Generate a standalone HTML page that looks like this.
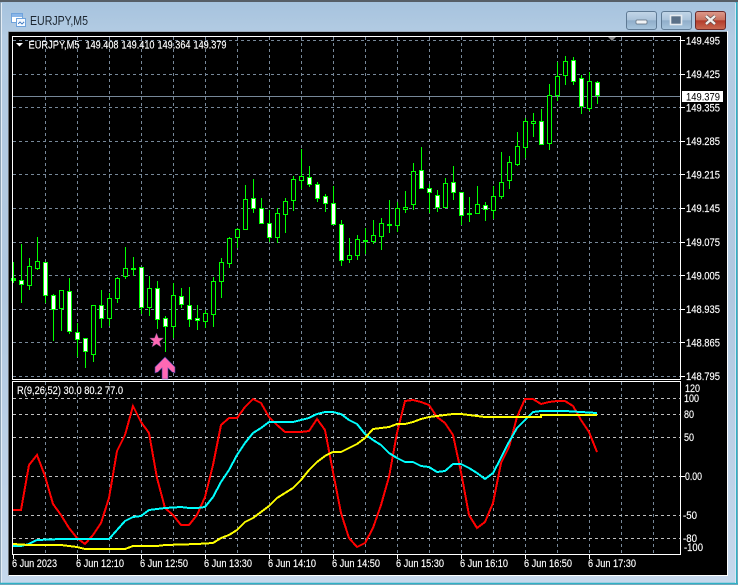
<!DOCTYPE html>
<html><head><meta charset="utf-8"><title>EURJPY,M5</title>
<style>
html,body{margin:0;padding:0;background:#fff;width:738px;height:585px;overflow:hidden}
svg{display:block}
text{font-family:"Liberation Sans",sans-serif;font-size:11px;fill:#fff;stroke:#fff;stroke-width:.15}
.w path{stroke:#0f0;stroke-width:1;fill:none}
.w rect{stroke:#0f0;stroke-width:1;fill:#000}
.w rect.f{fill:#fff}
.w rect.g{fill:#0f0}
</style></head><body>
<svg width="738" height="585" viewBox="0 0 738 585" xmlns="http://www.w3.org/2000/svg">
<defs>
<linearGradient id="glass" x1="0" y1="0" x2="0" y2="1"><stop offset="0" stop-color="#a6c3de"/><stop offset=".06" stop-color="#b4cce3"/><stop offset=".5" stop-color="#b0c8e0"/><stop offset="1" stop-color="#c6d8ec"/></linearGradient>
<linearGradient id="btn" x1="0" y1="0" x2="0" y2="1"><stop offset="0" stop-color="#c3d6e8"/><stop offset=".48" stop-color="#aac3da"/><stop offset=".5" stop-color="#8fadc9"/><stop offset="1" stop-color="#a9c6de"/></linearGradient>
<linearGradient id="cls" x1="0" y1="0" x2="0" y2="1"><stop offset="0" stop-color="#dd9a8c"/><stop offset=".48" stop-color="#c8725f"/><stop offset=".5" stop-color="#b23a2a"/><stop offset="1" stop-color="#c96a52"/></linearGradient>
</defs>
<rect width="738" height="585" fill="#fff"/>
<rect x="0" y="0" width="738" height="585" fill="#8ea3b5"/>
<rect x="1" y="2" width="735" height="582" fill="url(#glass)"/>
<path d="M0 1H738" stroke="#44484c" stroke-width="1.5"/>
<path d="M1.5 3V583" stroke="#e4edf5" stroke-width="1"/>
<path d="M0 583.5H738M736.5 2V584" stroke="#2fb2c6" stroke-width="1.5"/>
<path d="M735.5 3V583" stroke="#d8e6f2" stroke-width="1"/>

<!-- title icon -->
<g shape-rendering="crispEdges">
<rect x="11.5" y="13.5" width="11" height="9" fill="#fff" stroke="#6fa3dc"/>
<rect x="12" y="14" width="10" height="3" fill="#8ab6e8"/>
<rect x="16.500" y="18.500" width="9" height="8" fill="#f4f9ff" stroke="#6fa3dc"/>
<path d="M18 24l2-2 2 2 2-2" stroke="#4f86c6" fill="none"/>
</g>
<text x="30" y="25" style="font-size:12.5px;fill:#1c2630;stroke:none" textLength="58" lengthAdjust="spacingAndGlyphs">EURJPY,M5</text>

<!-- buttons -->
<rect x="626.5" y="11.5" width="30" height="18" rx="2.5" fill="url(#btn)" stroke="#5f7a94"/>
<rect x="636" y="20" width="11" height="4" rx="1" fill="#f0f3f6" stroke="#5a6a7a" stroke-width=".7"/>
<rect x="661.5" y="11.5" width="30" height="18" rx="2.5" fill="url(#btn)" stroke="#5f7a94"/>
<rect x="670.500" y="15.500" width="11" height="9" fill="#5a7088" stroke="#e6ebf0" stroke-width="1.6"/>
<rect x="695.5" y="11.5" width="30" height="18" rx="2.5" fill="url(#cls)" stroke="#6b2a2a"/>
<path d="M706 16l9 8M715 16l-9 8" stroke="#5a4a4a" stroke-width="3.6"/>
<path d="M706 16l9 8M715 16l-9 8" stroke="#f2f0ee" stroke-width="2.4"/>

<!-- client -->
<rect x="8" y="31" width="720" height="545" fill="#fff"/>
<rect x="8" y="32" width="719" height="543" fill="#000"/>
<path d="M8.5 32V575.5" stroke="#6a6f74"/>
<path d="M8 31.5H727" stroke="#9aa9b6"/>

<g shape-rendering="crispEdges">
<!-- grid main -->
<g stroke="#778899" stroke-width="1" stroke-dasharray="3 3" fill="none">
<path d="M13 40.5H680M13 74.5H680M13 107.5H680M13 141.5H680M13 174.5H680M13 208.5H680M13 242.5H680M13 275.5H680M13 309.5H680M13 342.5H680M13 376.5H680"/>
<path d="M45.5 37V379M77.5 37V379M109.5 37V379M141.5 37V379M173.5 37V379M205.5 37V379M237.5 37V379M269.5 37V379M301.5 37V379M333.5 37V379M365.5 37V379M397.5 37V379M429.5 37V379M461.5 37V379M493.5 37V379M525.5 37V379M557.5 37V379M589.5 37V379M621.5 37V379M653.5 37V379"/>
<path d="M45.5 382V554M77.5 382V554M109.5 382V554M141.5 382V554M173.5 382V554M205.5 382V554M237.5 382V554M269.5 382V554M301.5 382V554M333.5 382V554M365.5 382V554M397.5 382V554M429.5 382V554M461.5 382V554M493.5 382V554M525.5 382V554M557.5 382V554M589.5 382V554M621.5 382V554M653.5 382V554"/>
</g>
<g stroke="#c0c0c0" stroke-width="1" stroke-dasharray="3 3" fill="none">
<path d="M13 398.5H680M13 414.5H680M13 437.5H680M13 476.5H680M13 515.5H680M13 538.5H680"/>
</g>
<path d="M13 96.5H680" stroke="#778899"/>

<!-- candles -->
<g class="w">
<path d="M13.5 262V283M21.5 244V303M29.5 258V290M37.5 237V270M45.5 262V303M53.5 294V341M61.5 290V331M69.5 278V334M77.5 323V357M85.5 338V368M93.5 305V362M101.5 290V328M109.5 293V326M117.5 277V303M125.5 247V279M133.5 257V276M141.5 267V314M149.5 276V316M157.5 281V329M165.5 316V352M173.5 283V338M181.5 288V308M189.5 287V327M197.5 305V330M205.5 310V328M213.5 277V327M221.5 258V298M229.5 237V268M237.5 228V248M245.5 185V230M253.5 179V213M261.5 198V224M269.5 210V242M277.5 208V243M285.5 198V233M293.5 176V211M301.5 149V189M309.5 166V187M317.5 182V202M325.5 194V212M333.5 186V225M341.5 220V266M349.5 238V263M357.5 235V260M365.5 228V254M373.5 220V244M381.5 218V250M389.5 200V233M397.5 202V232M405.5 191V213M413.5 163V210M421.5 147V189M429.5 184V213M437.5 190V212M445.5 178V208M453.5 166V200M461.5 192V225M469.5 197V222M477.5 186V214M485.5 202V221M493.5 186V219M501.5 152V199M509.5 156V189M517.5 132V166M525.5 118V158M533.5 113V137M541.5 109V145M549.5 84V150M557.5 62V101M565.5 56V85M573.5 57V85M581.5 75V114M589.5 72V111M597.5 81V104"/>
<rect class="g" x="11.5" y="278.5" width="4" height="2"/>
<rect class="f" x="19.5" y="280.5" width="4" height="4"/>
<rect x="27.5" y="266.5" width="4" height="19"/>
<rect x="35.5" y="261.5" width="4" height="7"/>
<rect class="f" x="43.5" y="262.5" width="4" height="33"/>
<rect class="f" x="51.5" y="295.5" width="4" height="14"/>
<rect x="59.5" y="290.5" width="4" height="18"/>
<rect class="f" x="67.5" y="291.5" width="4" height="40"/>
<rect class="f" x="75.5" y="332.5" width="4" height="7"/>
<rect class="f" x="83.5" y="338.5" width="4" height="13"/>
<rect x="91.5" y="305.5" width="4" height="49"/>
<rect class="f" x="99.5" y="305.5" width="4" height="13"/>
<rect x="107.5" y="298.5" width="4" height="20"/>
<rect x="115.5" y="278.5" width="4" height="20"/>
<rect x="123.5" y="268.5" width="4" height="8"/>
<rect class="g" x="131.5" y="268.5" width="4" height="1"/>
<rect class="f" x="139.5" y="267.5" width="4" height="40"/>
<rect x="147.5" y="288.5" width="4" height="19"/>
<rect class="f" x="155.5" y="288.5" width="4" height="31"/>
<rect class="f" x="163.5" y="318.5" width="4" height="8"/>
<rect x="171.5" y="295.5" width="4" height="31"/>
<rect class="f" x="179.5" y="296.5" width="4" height="8"/>
<rect class="f" x="187.5" y="305.5" width="4" height="14"/>
<rect class="f" x="195.5" y="318.5" width="4" height="2"/>
<rect x="203.5" y="313.5" width="4" height="8"/>
<rect x="211.5" y="281.5" width="4" height="33"/>
<rect x="219.5" y="262.5" width="4" height="19"/>
<rect x="227.5" y="238.5" width="4" height="25"/>
<rect x="235.5" y="229.5" width="4" height="8"/>
<rect x="243.5" y="199.5" width="4" height="30"/>
<rect class="f" x="251.5" y="198.5" width="4" height="10"/>
<rect class="f" x="259.5" y="208.5" width="4" height="15"/>
<rect class="f" x="267.5" y="223.5" width="4" height="14"/>
<rect x="275.5" y="213.5" width="4" height="24"/>
<rect x="283.5" y="201.5" width="4" height="13"/>
<rect x="291.5" y="179.5" width="4" height="21"/>
<rect x="299.5" y="176.5" width="4" height="4"/>
<rect class="f" x="307.5" y="177.5" width="4" height="7"/>
<rect class="f" x="315.5" y="184.5" width="4" height="14"/>
<rect class="f" x="323.5" y="196.5" width="4" height="7"/>
<rect class="f" x="331.5" y="203.5" width="4" height="21"/>
<rect class="f" x="339.5" y="224.5" width="4" height="36"/>
<rect x="347.5" y="255.5" width="4" height="4"/>
<rect x="355.5" y="239.5" width="4" height="16"/>
<rect class="g" x="363.5" y="240.5" width="4" height="1"/>
<rect x="371.5" y="235.5" width="4" height="6"/>
<rect x="379.5" y="223.5" width="4" height="13"/>
<rect class="g" x="387.5" y="224.5" width="4" height="1"/>
<rect x="395.5" y="208.5" width="4" height="17"/>
<rect x="403.5" y="207.5" width="4" height="2"/>
<rect x="411.5" y="171.5" width="4" height="33"/>
<rect class="f" x="419.5" y="170.5" width="4" height="18"/>
<rect class="f" x="427.5" y="188.5" width="4" height="4"/>
<rect class="f" x="435.5" y="195.5" width="4" height="12"/>
<rect x="443.5" y="183.5" width="4" height="24"/>
<rect class="f" x="451.5" y="182.5" width="4" height="10"/>
<rect class="f" x="459.5" y="192.5" width="4" height="23"/>
<rect class="g" x="467.5" y="213.5" width="4" height="1"/>
<rect x="475.5" y="204.5" width="4" height="9"/>
<rect class="f" x="483.5" y="205.5" width="4" height="4"/>
<rect x="491.5" y="196.5" width="4" height="14"/>
<rect x="499.5" y="182.5" width="4" height="14"/>
<rect x="507.5" y="162.5" width="4" height="18"/>
<rect x="515.5" y="146.5" width="4" height="18"/>
<rect x="523.5" y="121.5" width="4" height="26"/>
<rect x="531.5" y="121.5" width="4" height="2"/>
<rect class="f" x="539.5" y="121.5" width="4" height="23"/>
<rect x="547.5" y="95.5" width="4" height="48"/>
<rect x="555.5" y="76.5" width="4" height="19"/>
<rect x="563.5" y="61.5" width="4" height="14"/>
<rect class="f" x="571.5" y="60.5" width="4" height="21"/>
<rect class="f" x="579.5" y="78.5" width="4" height="28"/>
<rect x="587.5" y="81.5" width="4" height="27"/>
<rect class="f" x="595.5" y="82.5" width="4" height="13"/>
</g>

<!-- oscillator lines -->
<polyline fill="none" stroke="#f00" stroke-width="2" points="13,510 21,510 29,465 37,455 45,476 53,504 61,515 69,528 77,538 85,544 93,535 101,523 109,498 117,451 125,435 133,406 141,422 149,433 157,478 165,508 173,515 181,525 189,525 197,515 205,497 213,465 221,425 229,418 237,418 245,407 253,399 261,403 269,417 277,425 285,432 293,432 301,432 309,431 317,419 325,430 333,472 341,513 349,538 357,547 365,543 373,528 381,505 389,477 397,433 405,401 413,400 421,402 429,405 437,417 445,423 453,435 461,472 469,515 477,528 485,522 493,503 501,463 509,447 517,417 525,399 533,399 541,404 549,402 557,401 565,401 573,406 581,420 589,432 597,452"/>
<polyline fill="none" stroke="#0ff" stroke-width="2" points="13,546 21,546 29,544 37,540 61,539 109,539 117,530 125,521 133,517 141,516 149,510 157,509 165,508 181,507 189,508 197,508 205,507 213,497 221,482 229,470 237,455 245,443 253,433 261,428 269,422 293,422 301,420 309,418 317,414 325,412 333,412 341,414 349,420 357,424 365,434 373,440 381,445 389,453 397,458 405,462 413,462 421,466 429,467 437,472 445,471 453,464 461,464 469,468 477,473 485,479 493,473 501,458 509,442 517,428 525,420 533,412 541,411 565,411 597,413"/>
<polyline fill="none" stroke="#ff0" stroke-width="2" points="13,544 29,545 61,545 69,546 77,547 85,549 125,549 133,546 157,546 165,545 197,544 213,543 221,538 229,535 237,530 245,522 253,518 261,512 269,506 277,498 293,488 301,480 309,470 317,462 325,456 333,452 341,452 349,448 357,444 365,438 373,429 381,428 389,427 397,424 405,424 413,422 421,419 429,417 437,416 445,415 453,414 461,414 469,415 477,416 485,417 541,417 541,415 597,415"/>

<!-- frame lines -->
<path d="M12.5 36.5H680.5V379.5H12.5Z" fill="none" stroke="#fff"/>
<path d="M12.5 381.5H680.5V554.5H12.5Z" fill="none" stroke="#fff"/>
<path d="M681 40.5h4M681 74.5h4M681 107.5h4M681 141.5h4M681 174.5h4M681 208.5h4M681 242.5h4M681 275.5h4M681 309.5h4M681 342.5h4M681 376.5h4M681 476.5h4" stroke="#fff"/>
<path d="M13.5 555v4M77.5 555v4M141.5 555v4M205.5 555v4M269.5 555v4M333.5 555v4M397.5 555v4M461.5 555v4M525.5 555v4M589.5 555v4" stroke="#fff"/>
<rect x="682" y="91" width="41" height="11" fill="#fff"/>
</g>

<!-- markers -->
<path d="M612 41l-4-4h8z" fill="#8a8a8a"/>
<path d="M156.5 333l2 5h5l-4 3.5 1.5 5.5-4.5-3-4.5 3 1.5-5.5-4-3.500h5z" fill="#ff69b4" stroke="#5c3a6e" stroke-width=".5"/>
<path d="M165 357l10 10v6l-3-1-4-4v11h-6v-11l-4 4-3 1v-6z" fill="#ff69b4" stroke="#3b3f9e" stroke-width=".6"/>

<!-- header text -->
<path d="M16 43h7l-3.500 3.500z" fill="#fff"/>
<text x="28.500" y="48.500" textLength="51" lengthAdjust="spacingAndGlyphs">EURJPY,M5</text>
<text x="85.500" y="48.500" textLength="33" lengthAdjust="spacingAndGlyphs">149.408</text>
<text x="121.500" y="48.500" textLength="33" lengthAdjust="spacingAndGlyphs">149.410</text>
<text x="157.500" y="48.500" textLength="33" lengthAdjust="spacingAndGlyphs">149.364</text>
<text x="193.500" y="48.500" textLength="33" lengthAdjust="spacingAndGlyphs">149.379</text>
<text x="17" y="394" textLength="106" lengthAdjust="spacingAndGlyphs">R(9,26,52) 30.0 80.2 77.0</text>

<!-- price axis -->
<g>
<text x="686" y="44.500" textLength="34" lengthAdjust="spacingAndGlyphs">149.495</text>
<text x="686" y="78" textLength="34" lengthAdjust="spacingAndGlyphs">149.425</text>
<text x="686" y="111.500" textLength="34" lengthAdjust="spacingAndGlyphs">149.355</text>
<text x="686" y="145" textLength="34" lengthAdjust="spacingAndGlyphs">149.285</text>
<text x="686" y="178.500" textLength="34" lengthAdjust="spacingAndGlyphs">149.215</text>
<text x="686" y="212" textLength="34" lengthAdjust="spacingAndGlyphs">149.145</text>
<text x="686" y="246" textLength="34" lengthAdjust="spacingAndGlyphs">149.075</text>
<text x="686" y="279.500" textLength="34" lengthAdjust="spacingAndGlyphs">149.005</text>
<text x="686" y="313" textLength="34" lengthAdjust="spacingAndGlyphs">148.935</text>
<text x="686" y="346.500" textLength="34" lengthAdjust="spacingAndGlyphs">148.865</text>
<text x="686" y="380" textLength="34" lengthAdjust="spacingAndGlyphs">148.795</text>
<text x="686" y="100.500" textLength="34" lengthAdjust="spacingAndGlyphs" style="fill:#000;stroke:none">149.379</text>
<text x="685" y="392" textLength="15" lengthAdjust="spacingAndGlyphs">120</text>
<text x="684" y="402" textLength="15" lengthAdjust="spacingAndGlyphs">100</text>
<text x="684" y="418" textLength="10" lengthAdjust="spacingAndGlyphs">80</text>
<text x="684" y="441" textLength="10" lengthAdjust="spacingAndGlyphs">50</text>
<text x="685" y="480" textLength="17" lengthAdjust="spacingAndGlyphs">0.00</text>
<text x="683" y="519" textLength="14" lengthAdjust="spacingAndGlyphs">-50</text>
<text x="683" y="542" textLength="14" lengthAdjust="spacingAndGlyphs">-80</text>
<text x="684" y="551" textLength="19" lengthAdjust="spacingAndGlyphs">-100</text>
</g>

<!-- time axis -->
<g>
<text x="12" y="567" textLength="45" lengthAdjust="spacingAndGlyphs">6 Jun 2023</text>
<text x="76" y="567" textLength="48" lengthAdjust="spacingAndGlyphs">6 Jun 12:10</text>
<text x="140" y="567" textLength="48" lengthAdjust="spacingAndGlyphs">6 Jun 12:50</text>
<text x="204" y="567" textLength="48" lengthAdjust="spacingAndGlyphs">6 Jun 13:30</text>
<text x="268" y="567" textLength="48" lengthAdjust="spacingAndGlyphs">6 Jun 14:10</text>
<text x="332" y="567" textLength="48" lengthAdjust="spacingAndGlyphs">6 Jun 14:50</text>
<text x="396" y="567" textLength="48" lengthAdjust="spacingAndGlyphs">6 Jun 15:30</text>
<text x="460" y="567" textLength="48" lengthAdjust="spacingAndGlyphs">6 Jun 16:10</text>
<text x="524" y="567" textLength="48" lengthAdjust="spacingAndGlyphs">6 Jun 16:50</text>
<text x="588" y="567" textLength="48" lengthAdjust="spacingAndGlyphs">6 Jun 17:30</text>
</g>
</svg>
</body></html>
